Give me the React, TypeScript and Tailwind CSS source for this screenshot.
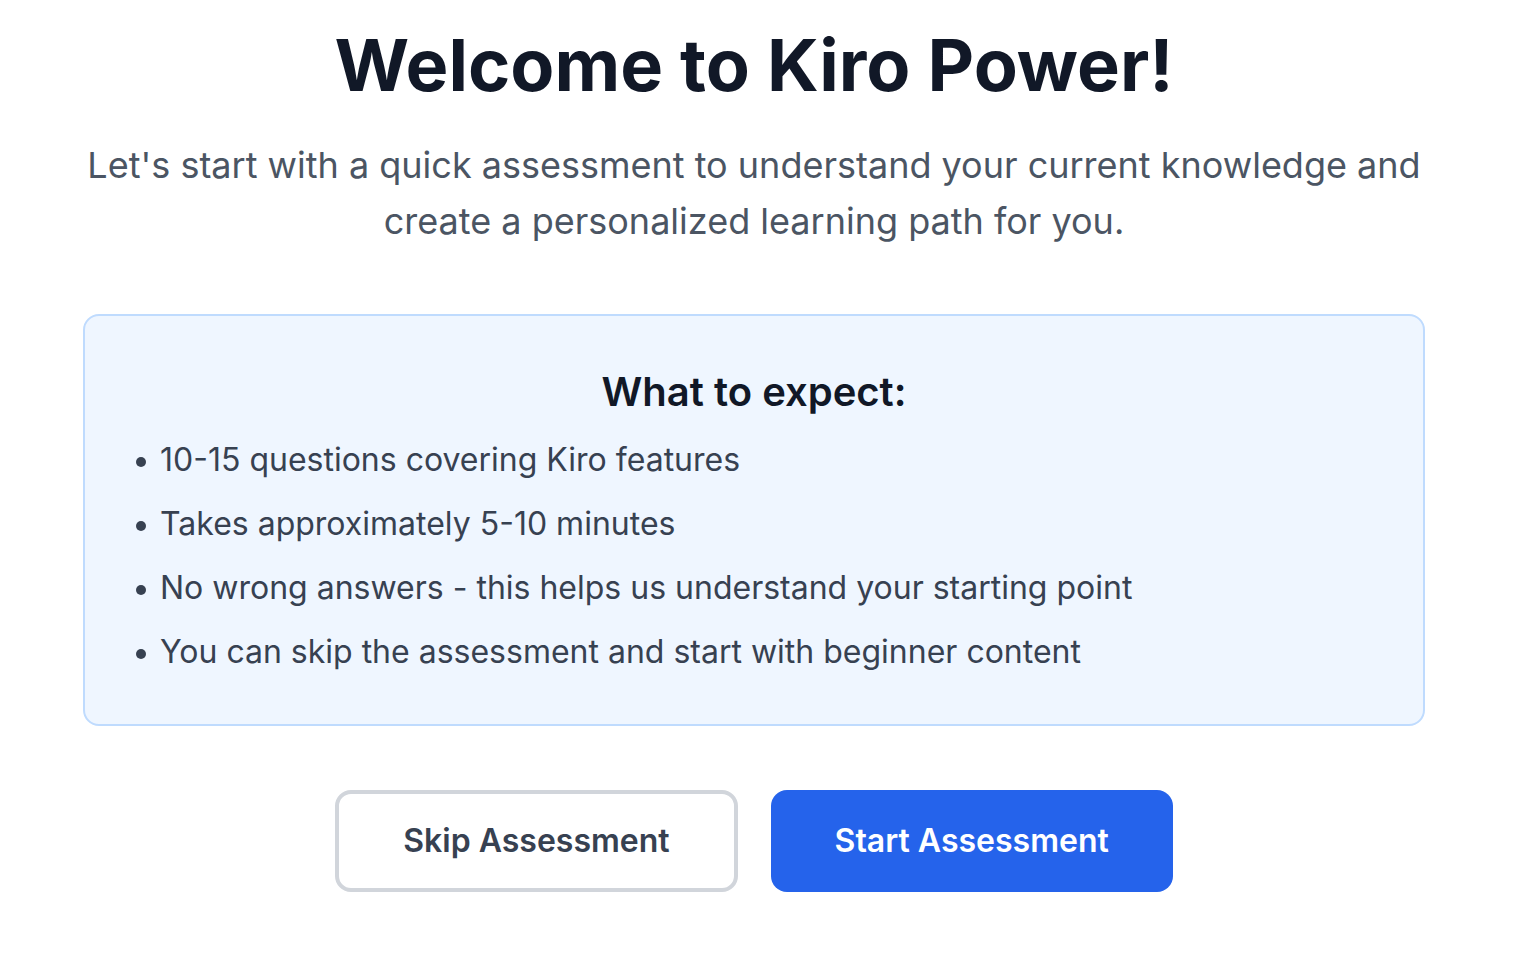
export default function App() {
  const items = [
    "10-15 questions covering Kiro features",
    "Takes approximately 5-10 minutes",
    "No wrong answers - this helps us understand your starting point",
    "You can skip the assessment and start with beginner content",
  ];

  return (
    <div className="min-h-screen bg-white pt-[25px] pr-[6px] font-['Inter',sans-serif]">
      <div className="mx-auto w-[1342px] text-center">
        <h1 className="mb-[32px] text-[72px] leading-[80px] font-bold text-[#111827]">
          Welcome to Kiro Power!
        </h1>
        <p className="mb-[65px] text-[36px] leading-[56px] text-[#4b5563]">
          Let's start with a quick assessment to understand your current knowledge and create a
          personalized learning path for you.
        </p>

        {/* What to expect box */}
        <div className="rounded-[16px] border-2 border-[#bfdbfe] bg-[#eff6ff] p-[48px]">
          <h2 className="mb-[16px] text-[40px] leading-[56px] font-semibold text-[#111827]">
            What to expect:
          </h2>
          <ul className="space-y-[16px] text-left text-[32px] leading-[48px] text-[#374151]">
            {items.map((item) => (
              <li key={item} className="flex items-center">
                <span className="mt-[3px] ml-[3px] mr-[14px] h-[10px] w-[10px] shrink-0 rounded-full bg-[#374151]" />
                {item}
              </li>
            ))}
          </ul>
        </div>

        <div className="mt-[64px] flex justify-center gap-[33px]">
          <button className="h-[102px] rounded-[16px] border-4 border-[#d1d5db] bg-white px-[64px] text-[32px] font-semibold text-[#374151]">
            Skip Assessment
          </button>
          <button className="h-[102px] rounded-[16px] bg-[#2563eb] px-[64px] text-[32px] font-semibold text-white">
            Start Assessment
          </button>
        </div>
      </div>
    </div>
  );
}
